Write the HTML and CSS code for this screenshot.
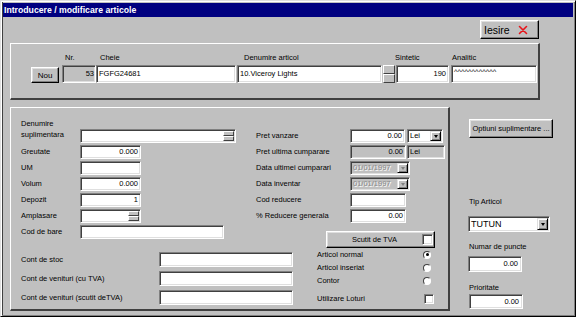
FILE: index.html
```html
<!DOCTYPE html>
<html lang="ro">
<head>
  <meta charset="UTF-8" />
  <title>Introducere / modificare articole</title>
  <link rel="stylesheet" href="styles.css">
</head>
<body>

<div class="window">
  <div class="titlebar">Introducere / modificare articole</div>

  <div class="client">
    <div class="toolbar">
      <button class="btn btn-exit" type="button">Iesire
        <svg class="ico-x" viewBox="0 0 10 10" width="10" height="10"><path d="M1.5 1.5 L8.5 8.5 M8.5 1.5 L1.5 8.5" stroke="#e8151b" stroke-width="1.6" stroke-linecap="round"/></svg>
      </button>
    </div>

    <!-- Key row: Nr / Cheie / Denumire / Sintetic / Analitic -->
    <div class="panel panel-key">
      <div class="kcol kcol-nou"><button class="btn btn-nou" type="button">Nou</button></div>
      <div class="kcol kcol-nr"><span class="klbl">Nr.</span><div class="field field-k field-ro num">53</div></div>
      <div class="kcol kcol-cheie"><span class="klbl">Cheie</span><div class="field field-k">FGFG24681</div></div>
      <div class="kcol kcol-den">
        <span class="klbl">Denumire articol</span>
        <div class="den-wrap">
          <div class="field field-k w145">10.Viceroy Lights</div>
          <span class="spin spin-k"><i></i><i></i></span>
        </div>
      </div>
      <div class="kcol kcol-sint"><span class="klbl">Sintetic</span><div class="field field-k num">190</div></div>
      <div class="kcol kcol-anal"><span class="klbl">Analitic</span><div class="field field-k carets">^^^^^^^^^^^^</div></div>
    </div>

    <div class="lower">
      <div class="panel panel-main">
        <div class="sect sect-top">
          <div class="col-left">
            <div class="row row-first">
              <span class="lbl">Denumire<br>suplimentara</span>
              <div class="field spinbox w156"><span class="txt"></span><span class="spin"><i></i><i></i></span></div>
            </div>
            <div class="row"><span class="lbl">Greutate</span><div class="field num w61">0.000</div></div>
            <div class="row"><span class="lbl">UM</span><div class="field w61"></div></div>
            <div class="row"><span class="lbl">Volum</span><div class="field num w61">0.000</div></div>
            <div class="row"><span class="lbl">Depozit</span><div class="field num w61">1</div></div>
            <div class="row">
              <span class="lbl">Amplasare</span>
              <div class="field spinbox w61"><span class="txt"></span><span class="spin"><i></i><i></i></span></div>
            </div>
            <div class="row"><span class="lbl">Cod de bare</span><div class="field w144"></div></div>
          </div>

          <div class="col-mid">
            <div class="row">
              <span class="lbl">Pret vanzare</span>
              <div class="field num w55">0.00</div>
              <div class="field combo w36 lei"><span class="txt">Lei</span><span class="dd"></span></div>
            </div>
            <div class="row">
              <span class="lbl">Pret ultima cumparare</span>
              <div class="field field-ro num w56">0.00</div>
              <div class="field field-ro w38 lei-ro">Lei</div>
            </div>
            <div class="row">
              <span class="lbl">Data ultimei cumparari</span>
              <div class="field combo off w60"><span class="txt">01/01/1997</span><span class="dd dd-off"></span></div>
            </div>
            <div class="row">
              <span class="lbl">Data inventar</span>
              <div class="field combo off w60"><span class="txt">01/01/1997</span><span class="dd dd-off"></span></div>
            </div>
            <div class="row"><span class="lbl">Cod reducere</span><div class="field w56"></div></div>
            <div class="row"><span class="lbl">% Reducere generala</span><div class="field num w56">0.00</div></div>

            <div class="btn chkbtn"><span class="txt">Scutit de TVA</span><span class="chk"></span></div>
          </div>
        </div>

        <div class="sect sect-bottom">
          <div class="col-cont">
            <div class="row row-cont"><span class="lbl">Cont de stoc</span><div class="field w134"></div></div>
            <div class="row row-cont"><span class="lbl">Cont de venituri (cu TVA)</span><div class="field w134"></div></div>
            <div class="row row-cont"><span class="lbl">Cont de venituri (scutit deTVA)</span><div class="field w134"></div></div>
          </div>
          <div class="col-opt">
            <div class="row row-opt"><span class="lbl">Articol normal</span><span class="radio on"></span></div>
            <div class="row row-opt"><span class="lbl">Articol inseriat</span><span class="radio"></span></div>
            <div class="row row-opt"><span class="lbl">Contor</span><span class="radio"></span></div>
            <div class="row row-opt row-loturi"><span class="lbl">Utilizare Loturi</span><span class="chk chk-sm"></span></div>
          </div>
        </div>
      </div>

      <div class="sidebar">
        <button class="btn btn-opt" type="button">Optiuni suplimentare ...</button>
        <span class="side-lbl side-tip">Tip Articol</span>
        <div class="field combo combo-big"><span class="txt">TUTUN</span><span class="dd"></span></div>
        <span class="side-lbl side-puncte">Numar de puncte</span>
        <div class="field num field-side">0.00</div>
        <span class="side-lbl side-prio">Prioritate</span>
        <div class="field num field-side field-prio">0.00</div>
      </div>
    </div>
  </div>
</div>

</body>
</html>
```

FILE: styles.css
```css
* { box-sizing: border-box; }

html, body {
  margin: 0;
  padding: 0;
}

body {
  width: 576px;
  height: 317px;
  overflow: hidden;
  background: #c0c0c0;
  font-family: "Liberation Sans", Arial, sans-serif;
  font-size: 7.5px;
  color: #000;
}

/* Window frame */
.window {
  width: 576px;
  height: 317px;
  display: flex;
  flex-direction: column;
  padding: 2px;
  background: #c0c0c0;
  border: 1px solid;
  border-color: #dfdfdf #000 #000 #dfdfdf;
  box-shadow: inset 1px 1px #fff, inset -1px -1px #808080, inset 2px 0 #404040;
}
.titlebar {
  height: 14px;
  padding-left: 1px;
  background: #000080;
  color: #fff;
  font-size: 8.7px;
  font-weight: bold;
  line-height: 14px;
  white-space: nowrap;
}
.client {
  flex: 1;
  display: flex;
  flex-direction: column;
}

/* Buttons */
.btn {
  display: flex;
  align-items: center;
  justify-content: center;
  margin: 0;
  padding: 0;
  font: inherit;
  color: #000;
  background: #c0c0c0;
  border: 1px solid;
  border-color: #fff #000 #000 #fff;
  box-shadow: inset -1px -1px #808080, inset 1px 1px #dfdfdf;
  white-space: nowrap;
}
.toolbar {
  display: flex;
  justify-content: flex-end;
  padding: 3px 34px 0 0;
}
.btn-exit {
  width: 59px;
  height: 19px;
  justify-content: flex-start;
  gap: 8px;
  padding-left: 3px;
  font-size: 10.5px;
}
.btn-nou {
  width: 28px;
  height: 16px;
  font-size: 8px;
}
.btn-opt {
  width: 84px;
  height: 19px;
  margin-top: 12px;
}

/* Sunken edit fields */
.field {
  height: 14px;
  padding: 0 2px;
  line-height: 12px;
  white-space: nowrap;
  overflow: hidden;
  background: #fff;
  border: 1px solid;
  border-color: #808080 #fff #fff #808080;
  box-shadow: inset 1px 1px #404040, inset -1px -1px #dfdfdf;
}
.num { text-align: right; }
.field-ro { background: #c0c0c0; }
.off {
  background: #c0c0c0;
  color: #8a8a8a;
  text-shadow: 1px 1px #fff;
}

.spinbox,
.combo {
  display: flex;
  padding: 1px;
}
.spinbox .txt,
.combo .txt {
  flex: 1;
  padding-left: 1px;
  line-height: 10px;
}
.spin {
  display: flex;
  flex-direction: column;
  width: 11px;
}
.spin i {
  flex: 1;
  background: #c0c0c0;
  border: 1px solid;
  border-color: #fff #404040 #404040 #fff;
}
.dd {
  display: flex;
  align-items: center;
  justify-content: center;
  width: 11px;
  background: #c0c0c0;
  border: 1px solid;
  border-color: #dfdfdf #000 #000 #dfdfdf;
  box-shadow: inset 1px 1px #fff, inset -1px -1px #808080;
}
.dd::after {
  content: "";
  border-left: 2.5px solid transparent;
  border-right: 2.5px solid transparent;
  border-top: 3px solid #000;
}
.dd-off::after { border-top-color: #808080; }

.chk {
  width: 11px;
  height: 11px;
  background: #fff;
  border: 1px solid;
  border-color: #808080 #fff #fff #808080;
  box-shadow: inset 1px 1px #404040, inset -1px -1px #dfdfdf;
}
.chk-sm {
  width: 10px;
  height: 10px;
}
.radio {
  position: relative;
  width: 8px;
  height: 8px;
  margin-right: 3px;
  border-radius: 50%;
  background: #fff;
  border: 1px solid;
  border-color: #404040 #fff #fff #404040;
}
.radio.on::after {
  content: "";
  position: absolute;
  left: 1.5px;
  top: 1.5px;
  width: 3px;
  height: 3px;
  border-radius: 50%;
  background: #000;
}

/* Panels */
.panel {
  border-style: solid;
  border-width: 1px 2px 2px 1px;
  border-color: #fff #404040 #404040 #fff;
}

.panel-key {
  display: flex;
  align-items: flex-start;
  width: 530px;
  height: 57px;
  margin: 4px 0 0 7px;
  padding: 8px 0 0 20px;
}
.kcol {
  display: flex;
  flex-direction: column;
}
.klbl {
  height: 11px;
  margin-bottom: 2px;
  line-height: 11px;
  white-space: nowrap;
}
.field-k {
  height: 18px;
  line-height: 16px;
}
.kcol-nou { width: 28px; padding-top: 15px; }
.kcol-nr { width: 34px; margin-left: 3px; }
.kcol-nr .klbl { padding-left: 3px; }
.kcol-nr .field { padding-right: 1px; }
.kcol-cheie { width: 140px; }
.kcol-cheie .klbl { padding-left: 4px; }
.kcol-den { width: 158px; margin-left: 1px; }
.kcol-den .klbl { padding-left: 7px; }
.den-wrap { display: flex; gap: 1px; }
.spin-k { width: 12px; height: 18px; }
.kcol-sint { width: 53px; margin-left: 1px; }
.kcol-sint .klbl { margin-left: -1px; }
.kcol-anal { width: 86px; margin-left: 2px; }
.kcol-anal .klbl { padding-left: 1px; }
.carets { line-height: 12px; }

.lower {
  display: flex;
  margin-top: 7px;
  padding-left: 7px;
}
.panel-main {
  width: 440px;
  height: 204px;
  padding: 10px 0 0 10px;
}
.sect {
  display: flex;
  align-items: flex-start;
}
.row {
  display: flex;
  align-items: flex-start;
  height: 16px;
}
.lbl {
  line-height: 14px;
  white-space: nowrap;
}

.col-left { width: 215px; }
.col-left .lbl { width: 59px; }
.row-first { height: 27px; }
.row-first .lbl { line-height: 11px; }
.row-first .field { margin-top: 11px; }

.col-mid {
  width: 189px;
  margin: 11px 0 0 20px;
}
.col-mid .lbl { width: 94px; }
.lei { margin-left: 2px; }
.lei-ro { margin-left: 1px; }

.chkbtn {
  width: 109px;
  height: 17px;
  margin: 6px 0 0 70px;
  padding-right: 1px;
}
.chkbtn .txt {
  flex: 1;
  text-align: center;
}

.col-cont {
  width: 272px;
  padding-top: 4px;
}
.row-cont { height: 19px; }
.row-cont .lbl {
  width: 138px;
  line-height: 15px;
}
.row-cont .field {
  height: 15px;
  line-height: 13px;
}
.col-opt {
  width: 117px;
  margin-left: 24px;
}
.row-opt {
  height: 13px;
  align-items: center;
  justify-content: space-between;
}
.row-opt .lbl { line-height: 13px; }
.row-loturi { margin-top: 5px; }

/* Right column outside the panel */
.sidebar {
  display: flex;
  flex-direction: column;
  align-items: flex-start;
  margin-left: 19px;
}
.side-lbl {
  line-height: 11px;
  white-space: nowrap;
}
.side-tip { margin-top: 58px; }
.combo-big {
  width: 82px;
  height: 16px;
  margin: 9px 0 0 -1px;
  font-size: 9px;
}
.combo-big .txt { line-height: 12px; }
.side-puncte { margin-top: 9px; }
.field-side {
  width: 54px;
  height: 16px;
  line-height: 14px;
  margin: 4px 0 0 -1px;
  padding-right: 3px;
}
.side-prio { margin-top: 10px; }
.field-prio {
  height: 15px;
  line-height: 13px;
  margin: 1px 0 0 0;
}

/* Field widths */
.w36 { width: 36px; }
.w38 { width: 38px; }
.w55 { width: 55px; }
.w56 { width: 56px; }
.w60 { width: 60px; }
.w61 { width: 61px; }
.w134 { width: 134px; }
.w144 { width: 144px; }
.w145 { width: 145px; }
.w156 { width: 156px; }
```
